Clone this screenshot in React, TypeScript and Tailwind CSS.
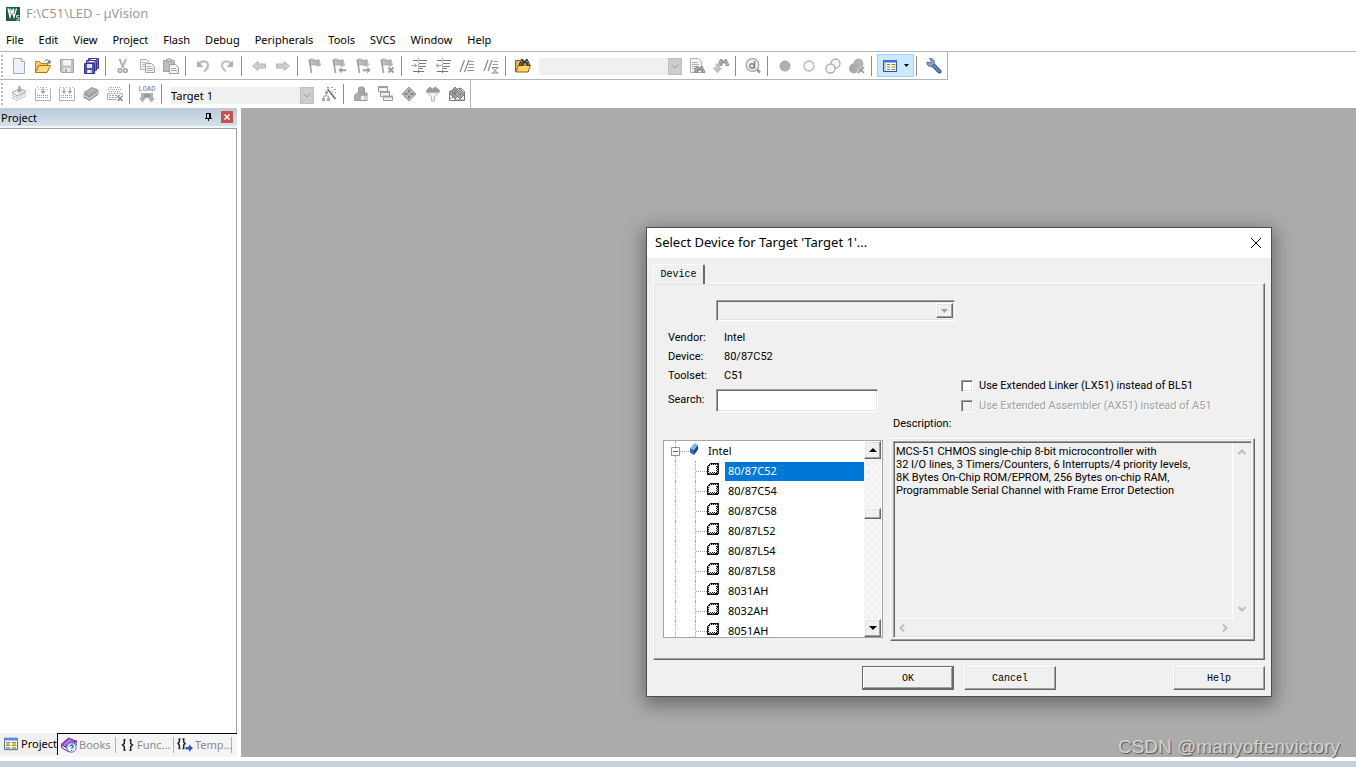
import { useState } from "react";
import type { ReactNode } from "react";

const UI_FONT = "font-['Noto_Sans','Open_Sans',sans-serif]";
const DLG_FONT = "font-['Roboto','Liberation_Sans',sans-serif]";
const MONO_FONT = "font-['Liberation_Mono',monospace]";

const RAISED =
  "border border-t-white border-l-white border-r-[#696969] border-b-[#696969] shadow-[inset_-1px_-1px_0_#a0a0a0,inset_1px_1px_0_#e3e3e3]";
const SUNKEN =
  "border border-t-[#a0a0a0] border-l-[#a0a0a0] border-r-white border-b-white shadow-[inset_1px_1px_0_#696969,inset_-1px_-1px_0_#e3e3e3]";
const RAISED_DEFAULT =
  "border border-[#696969] shadow-[inset_-1px_-1px_0_#696969,inset_1px_1px_0_#fff,inset_-2px_-2px_0_#a0a0a0]";

const MENUS = ["File", "Edit", "View", "Project", "Flash", "Debug", "Peripherals", "Tools", "SVCS", "Window", "Help"];

const DEVICES = ["80/87C52", "80/87C54", "80/87C58", "80/87L52", "80/87L54", "80/87L58", "8031AH", "8032AH", "8051AH"];

const DESCRIPTION = [
  "MCS-51 CHMOS single-chip 8-bit microcontroller with",
  "32 I/O lines, 3 Timers/Counters, 6 Interrupts/4 priority levels,",
  "8K Bytes On-Chip ROM/EPROM, 256 Bytes on-chip RAM,",
  "Programmable Serial Channel with Frame Error Detection",
].join("\n");

function Icon({ children, size = 16 }: { children: ReactNode; size?: number }) {
  return (
    <svg width={size} height={size} viewBox="0 0 16 16" fill="none" aria-hidden="true" className="shrink-0">
      {children}
    </svg>
  );
}

// small bitmap drawn one square per character, "." is empty
function Pixels({ rows, colors }: { rows: string[]; colors: Record<string, string> }) {
  return (
    <svg
      width={rows[0].length}
      height={rows.length}
      viewBox={`0 0 ${rows[0].length} ${rows.length}`}
      shapeRendering="crispEdges"
      aria-hidden="true"
      className="shrink-0"
    >
      {rows.flatMap((row, y) =>
        row.split("").map((c, x) =>
          colors[c] ? <rect key={`${x}-${y}`} x={x} y={y} width={1} height={1} fill={colors[c]} /> : null
        )
      )}
    </svg>
  );
}

const Binoculars = ({ x, y, color = "#777" }: { x: number; y: number; color?: string }) => (
  <g transform={`translate(${x} ${y})`}>
    <path d="M2 0h2l1 1.500h1L7 0h1.500L11 5v2H7.500V4.500h-3V7H0V5z" fill={color} />
    <path d="M2.500 2v1M8 2v1M1.500 5h1M9 5h1" stroke="#e4e4e4" />
  </g>
);

const Flag = () => (
  <>
    <path d="M2 2c1.500-1.200 3-1.200 4.500-.4s3.300 1 5.500 0l1.500 5.500c-2 1.200-3.500 1-5 .2S5.200 6.700 3.700 7.700z" fill="#bcbcbc" stroke="#a6a6a6" strokeWidth=".8" />
    <path d="M6.500 1.800l1 5M10 2.200l.8 5" stroke="#a4a4a4" />
    <path d="M2.200 1.500 4.500 15" stroke="#a0a0a0" strokeWidth="1.500" />
  </>
);

const Floppy = ({ fill, edge }: { fill: string; edge: string }) => (
  <>
    <path d="M1.500 1.500h13v13h-12l-1-1z" fill={fill} stroke={edge} />
    <path d="M4 2h8v5.500H4z" fill="#f4f4f6" />
    <path d="M4.500 10h7v4h-7z" fill="#e9e9ec" />
    <path d="M6 11h2v3H6z" fill={edge} />
  </>
);

const icons = {
  newFile: (
    <Icon>
      <path d="M2.500.5h8l3 3v12h-11z" fill="#eef1fb" stroke="#a3a8bc" />
      <path d="M10.500.5v3h3" fill="#fff" stroke="#a3a8bc" />
    </Icon>
  ),
  open: (
    <Icon>
      <path d="M.5 13.500v-10h4l1.500 2h6.500v3" fill="#f3c95b" stroke="#b8862a" />
      <path d="M.5 14.500 4 7.500h11.500l-3.500 7z" fill="#fbdc7c" stroke="#a97418" />
      <path d="M9.500 3.500c1-2 3.500-2.500 4.500 0" stroke="#4c6f9f" />
      <path d="M15.500 1.500v4h-4z" fill="#4c6f9f" />
    </Icon>
  ),
  save: (
    <Icon>
      <Floppy fill="#c2c2c2" edge="#a6a6a6" />
    </Icon>
  ),
  saveAll: (
    <Icon>
      <path d="M5.500.5h10v10h-10z" fill="#6467bd" stroke="#3a3c8f" />
      <path d="M3.500 2.500h10v10h-10z" fill="#7376cc" stroke="#3a3c8f" />
      <path d="M1.500 5.500h10v10h-10z" fill="#5053ad" stroke="#303284" />
      <path d="M4 6h5v4H4z" fill="#e6e8fa" />
      <path d="M4 12h5v3H4z" fill="#c7c9ee" />
      <path d="M5 12h2v3H5zM6 3h5v1H6zM8 1h5v1H8z" fill="#fff" />
    </Icon>
  ),
  cut: (
    <Icon>
      <path d="M4.500 1l4 9M11 1 7 10" stroke="#b4b4b4" strokeWidth="2" />
      <circle cx="5" cy="12.500" r="1.800" stroke="#a0a0a0" strokeWidth="1.500" />
      <circle cx="10.500" cy="12.500" r="1.800" stroke="#a0a0a0" strokeWidth="1.500" />
    </Icon>
  ),
  copy: (
    <Icon>
      <path d="M1.500 1.500h6l2 2v8h-8z" fill="#f2f2f2" stroke="#b2b2b2" />
      <path d="M3 4.500h4M3 6.500h4M3 8.500h4" stroke="#bbb" />
      <path d="M6.500 5.500h6l3 3v6h-9z" fill="#f2f2f2" stroke="#a6a6a6" />
      <path d="M8 8.500h4M8 10.500h6M8 12.500h6" stroke="#b0b0b0" />
    </Icon>
  ),
  paste: (
    <Icon>
      <path d="M.5 2.500h11v11H.5z" fill="#bdbdbd" stroke="#a2a2a2" />
      <path d="M3.500 3.500v-2h1.500c0-2 2-2 2 0h1.500v2z" fill="#dadada" stroke="#9a9a9a" />
      <path d="M6.500 6.500h6l3 3v6h-9z" fill="#f4f4f4" stroke="#9a9a9a" />
      <path d="M8 10.500h5M8 12.500h6" stroke="#aaa" />
    </Icon>
  ),
  undo: (
    <Icon>
      <path d="M4 6C6.500 2 12.500 2.500 13 7c.2 2.500-1.500 4.500-4 6.500" stroke="#bcbcbc" strokeWidth="2.200" />
      <path d="M2 2.500v6.500h6.500z" fill="#aeaeae" />
    </Icon>
  ),
  redo: (
    <Icon>
      <path d="M12 6C9.500 2 3.500 2.500 3 7c-.2 2.500 1.500 4.500 4 6.500" stroke="#c4c4c4" strokeWidth="2.200" />
      <path d="M14 2.500v6.500H7.500z" fill="#aeaeae" />
    </Icon>
  ),
  back: (
    <Icon>
      <path d="M1.500 8 7 3.500v2.500h7.500v4H7v2.500z" fill="#cfcfcf" stroke="#b2b2b2" />
    </Icon>
  ),
  forward: (
    <Icon>
      <path d="M14.500 8 9 3.500v2.500H1.500v4H9v2.500z" fill="#cfcfcf" stroke="#b2b2b2" />
    </Icon>
  ),
  flag: (
    <Icon>
      <Flag />
    </Icon>
  ),
  flagPrev: (
    <Icon>
      <Flag />
      <path d="M7 12l4-3.500V11h4.500v2.500H11V16z" fill="#a0a0a0" stroke="#fff" strokeWidth=".5" />
    </Icon>
  ),
  flagNext: (
    <Icon>
      <Flag />
      <path d="M16 12l-4-3.500V11H7.500v2.500H12V16z" fill="#a0a0a0" stroke="#fff" strokeWidth=".5" />
    </Icon>
  ),
  flagClear: (
    <Icon>
      <Flag />
      <path d="M9.500 9.500l5 5M14.500 9.500l-5 5" stroke="#9a9a9a" strokeWidth="1.800" />
    </Icon>
  ),
  indent: (
    <Icon>
      <path d="M2 2.500h14M8 5.500h7M8 8.500h7M8 10.500h4M2 13.500h11" stroke="#777" />
      <path d="M0 7.500h4" stroke="#aaa" />
      <path d="M3.500 5v5L6.500 7.500z" fill="#aaa" />
      <path d="M7.500 0v16" stroke="#888" strokeDasharray="1 1" />
    </Icon>
  ),
  outdent: (
    <Icon>
      <path d="M2 2.500h14M8 5.500h7M8 8.500h7M8 10.500h4M2 13.500h11" stroke="#777" />
      <path d="M3 7.500h4" stroke="#aaa" />
      <path d="M3.500 5v5L.5 7.500z" fill="#aaa" />
      <path d="M7.500 0v16" stroke="#888" strokeDasharray="1 1" />
    </Icon>
  ),
  comment: (
    <Icon>
      <path d="M1 14 5.500 2M5.500 14 10 2" stroke="#8d8d8d" strokeWidth="1.300" />
      <path d="M10.500 3.500H15M9.500 6.500H15M9 9.500h6M8 12.500h7" stroke="#999" />
    </Icon>
  ),
  uncomment: (
    <Icon>
      <path d="M1 13 5 2M5 13 9 2" stroke="#8d8d8d" strokeWidth="1.300" />
      <path d="M10.500 3.500H15M9.500 6.500H15" stroke="#999" />
      <path d="M8.500 9.500h7M9.500 10l5 5M14.500 10l-5 5M8.500 15h7" stroke="#8a8a8a" />
    </Icon>
  ),
  findInFiles: (
    <Icon>
      <path d="M.5 13.500v-11h4l1 1.500h8v9.500z" fill="#f0b93c" stroke="#7d5a12" />
      <path d="M1 14 3.500 7h12L13 14z" fill="#ffd768" stroke="#8b6417" />
      <Binoculars x={4} y={1} color="#3d3d3d" />
    </Icon>
  ),
  findText: (
    <Icon>
      <path d="M1.500.5h8l3 3v11h-11z" fill="#f3f3f3" stroke="#b0b0b0" />
      <path d="M3 4.500h6M3 6.500h7M3 8.500h5M3 10.500h4" stroke="#b2b2b2" />
      <Binoculars x={5} y={8} color="#8d8d8d" />
    </Icon>
  ),
  findNext: (
    <Icon>
      <Binoculars x={5} y={1} color="#999" />
      <path d="M3 6h3.500v4H9l-4.500 5L0 10h3z" fill="#c2c2c2" stroke="#b2b2b2" strokeWidth=".6" />
    </Icon>
  ),
  debug: (
    <Icon>
      <circle cx="7.500" cy="7" r="6.300" fill="#f1f1f1" stroke="#a4a4a4" strokeWidth="1.300" />
      <circle cx="7" cy="8" r="2.200" stroke="#858585" strokeWidth="1.500" />
      <path d="M9.500 3v7.500" stroke="#858585" strokeWidth="1.500" />
      <path d="M12 11.500l3 3" stroke="#9a9a9a" strokeWidth="2.500" />
    </Icon>
  ),
  bpInsert: (
    <Icon>
      <circle cx="8" cy="8" r="5" fill="#b0b0b0" stroke="#a2a2a2" />
    </Icon>
  ),
  bpEnable: (
    <Icon>
      <circle cx="8" cy="8" r="5" fill="#fafafa" stroke="#b4b4b4" strokeWidth="1.300" />
    </Icon>
  ),
  bpDisableAll: (
    <Icon>
      <circle cx="10.500" cy="5.500" r="4.500" fill="#f5f5f5" stroke="#adadad" strokeWidth="1.300" />
      <circle cx="5.500" cy="10.500" r="4.500" fill="#f9f9f9" stroke="#adadad" strokeWidth="1.300" />
    </Icon>
  ),
  bpKillAll: (
    <Icon>
      <circle cx="9.500" cy="5.500" r="5" fill="#b4b4b4" />
      <circle cx="5" cy="10.500" r="5" fill="#aaa" />
      <path d="M5 13l9-8v9H6z" fill="#b0b0b0" />
      <path d="M9 9l6 6M15 9l-6 6" stroke="#eee" strokeWidth="2.800" />
      <path d="M9 9l6 6M15 9l-6 6" stroke="#929292" strokeWidth="1.500" />
    </Icon>
  ),
  windowList: (
    <Icon>
      <path d="M1.500 2.500h13v11h-13z" fill="#fff" stroke="#2b51a1" />
      <path d="M1 2h14v2.500H1z" fill="#3f6fd0" />
      <path d="M2 5h2v8H2z" fill="#c4cbd8" />
      <path d="M5 6.500h3M5 9h3M5 11.500h3M9.500 6.500h4M9.500 9h4M9.500 11.500h4" stroke="#8a8718" strokeWidth="1.200" />
    </Icon>
  ),
  wrench: (
    <Icon>
      <path d="M7 7l6.500 6.500" stroke="#2f4a84" strokeWidth="4" strokeLinecap="round" />
      <path d="M7 7l6.500 6.500" stroke="#6f8cc2" strokeWidth="2" strokeLinecap="round" />
      <path d="M3.500.5 5.500 3 4 5 1 4C.5 7 3 9 5.500 8.500l3-3C9 3 7 0 3.500.5z" fill="#8ba0c4" stroke="#4f689c" />
    </Icon>
  ),
  translate: (
    <Icon>
      <path d="M1 11.500 6 14.500l9-5M1 9l5 3 9-5" stroke="#999" strokeDasharray="1.500 .7" />
      <path d="M1 6.500 9 2.500l6 3-9 4.500z" fill="#f0f0f0" stroke="#a4a4a4" />
      <path d="M7.500 0h2v4h2L8.500 7l-3-3h2z" fill="#a4a4a4" />
    </Icon>
  ),
  build: (
    <Icon>
      <path d="M.5 2.500v12h15v-12" stroke="#b2b2b2" />
      <path d="M2 1.500h12M3 3.500h11" stroke="#b0b0b0" strokeDasharray="1 2" />
      <path d="M2 9.500h12M2 11.500h12" stroke="#999" strokeDasharray="1 1" />
      <path d="M7.500 1h1v4h2L8 8 5.500 5h2z" fill="#999" />
    </Icon>
  ),
  rebuild: (
    <Icon>
      <path d="M.5 2.500v12h15v-12" stroke="#b2b2b2" />
      <path d="M1 1.500h14" stroke="#aaa" strokeDasharray="1 2" />
      <path d="M2 9.500h12M2 11.500h12" stroke="#999" strokeDasharray="1 1" />
      <path d="M4.500 2h1v3h1.500L5 8 3 5h1.500zM10.500 2h1v3H13L11 8 9 5h1.500z" fill="#999" />
    </Icon>
  ),
  batch: (
    <Icon>
      <path d="M1 7.500v4l5.500 3 8.500-6v-4" fill="#a0a0a0" stroke="#9a9a9a" />
      <path d="M1 9.500l5.500 3 8.500-6" stroke="#e8e8e8" />
      <path d="M1 6.500 9 1.500l6 2.500-8.500 5.500z" fill="#b2b2b2" stroke="#9c9c9c" />
    </Icon>
  ),
  stopBuild: (
    <Icon>
      <path d="M2 1.500h12M1 3.500h14M2 5.500h12" stroke="#a4a4a4" strokeDasharray="1 1" />
      <path d="M.5 7.500v6h9" stroke="#acacac" />
      <path d="M.5 7.500h15v3M2 9.500h12M2 11.500h8" stroke="#a0a0a0" strokeDasharray="2 1" />
      <path d="M10.500 10l5 5M15.500 10l-5 5" stroke="#8a8a8a" strokeWidth="1.500" />
    </Icon>
  ),
  wand: (
    <Icon>
      <path d="M6.500 3l8 10" stroke="#777" strokeWidth="1.800" />
      <path d="M6 1.500h2M10 1.500h2M13 3.500h2M11 5.500h1M14 6.500h1" stroke="#999" />
      <path d="M5.500 7v3M2.500 12.500V10h5v2.500" stroke="#a6a6a6" />
      <path d="M4 5h3v3H4zM1 12h3v3H1zM6 12h3v3H6z" fill="#a8a8a8" />
    </Icon>
  ),
  components: (
    <Icon>
      <path d="M5.500 7V2l1.500-1h3l1.500 1v5z" fill="#a6a6a6" stroke="#999" />
      <path d="M1.500 9.500 4 7h10v7.500H1.500z" fill="#acacac" stroke="#999" />
      <path d="M8 10h6v4H8z" fill="#f0f0f0" />
      <path d="M11 10h3v4h-3z" fill="#d0d0d0" />
    </Icon>
  ),
  layers: (
    <Icon>
      <path d="M1.500.5h9v5h-9z" fill="#f1f1f1" stroke="#999" />
      <path d="M1 0h10v2H1z" fill="#a0a0a0" />
      <path d="M3.500 5.500h9v5h-9z" fill="#f1f1f1" stroke="#999" />
      <path d="M3 5h10v2H3z" fill="#a0a0a0" />
      <path d="M6.500 10.500h9v4h-9z" fill="#f1f1f1" stroke="#999" />
      <path d="M6 9.500h10v2H6z" fill="#a0a0a0" />
    </Icon>
  ),
  diamond: (
    <Icon>
      <path d="M8 1l7 7-7 7-7-7z" fill="#b8b8b8" stroke="#999" />
      <path d="M8 3.500v3M8 9.500v3M3.500 8h3M9.500 8h3M7 5h2M7 11h2M5 7v2M11 7v2" stroke="#6f6f6f" />
    </Icon>
  ),
  funnel: (
    <Icon>
      <path d="M1 5l4-4 2.500 2L10.500 1 15 5l-3 2H4z" fill="#999" stroke="#8a8a8a" strokeDasharray="1 .5" />
      <path d="M2 6.500h12L9.500 11v4h-3v-4z" fill="#f0f0f0" stroke="#b2b2b2" />
    </Icon>
  ),
  packs: (
    <Icon>
      <path d="M.5 5.500v9h15v-9L12 2z" fill="#fff" stroke="#777" />
      <path d="M6 1l6 6-6 6L0 7z" fill="#9a9a9a" stroke="#808080" />
      <path d="M11 3l5 5-5 5-5-5z" fill="#acacac" stroke="#808080" />
      <path d="M3 7h3M6 4v6M9 8h5M11 5.500v5" stroke="#6c6c6c" strokeDasharray="1 1" />
      <path d="M1 13l3-2 3 3h8" stroke="#888" />
    </Icon>
  ),
};

const LoadIcon = () => (
  <span className="flex flex-col items-center">
    <span className={`${MONO_FONT} text-[7px] leading-[7px] text-[#6b6b6b]`}>LOAD</span>
    <svg width="16" height="10" viewBox="0 0 16 10" aria-hidden="true">
      <path d="M2 0h12v5h2l-3.500 4.500L9 5 8 5 7 5 3.500 9.500 0 5h2z" fill="#b0b0b0" />
      <path d="M5 1h6v3H5z" fill="#999" />
    </svg>
  </span>
);

function ToolButton({ label, children }: { label: string; children: ReactNode }) {
  return (
    <button type="button" aria-label={label} className="flex h-6 w-6 shrink-0 items-center justify-center">
      {children}
    </button>
  );
}

const Sep = () => <span className="ml-0.5 mr-[5px] h-5 w-px shrink-0 bg-[#8c8c8c]" />;

const Grip = () => <span className="ml-px mr-1 h-[22px] w-0.5 shrink-0 bg-[repeating-linear-gradient(180deg,#b9b9b9_0_2px,transparent_2px_4px)]" />;

function ToolCombo({ label, value }: { label: string; value: string }) {
  return (
    <div className="ml-1 mr-[3px] flex h-[17px] w-[143px] shrink-0 bg-[#f0f0f0]">
      <select aria-label={label} defaultValue={value} className="min-w-0 flex-1 appearance-none text-[11px] leading-[17px] outline-none">
        <option>{value}</option>
      </select>
      <span className="flex w-[14px] items-center justify-center border border-[#bdbdbd] bg-[#cdcdcd]">
        <svg width="8" height="5" viewBox="0 0 8 5" fill="none" aria-hidden="true">
          <path d="M.5.5 4 4 7.500.5" stroke="#9a9a9a" />
        </svg>
      </span>
    </div>
  );
}

function Toolbars() {
  return (
    <div className="flex flex-col items-start border-t border-[#b4b4b4] bg-white">
      <div className="flex h-7 items-center border-r border-b border-[#b4b4b4] pr-px">
        <Grip />
        <ToolButton label="New file">{icons.newFile}</ToolButton>
        <ToolButton label="Open">{icons.open}</ToolButton>
        <ToolButton label="Save">{icons.save}</ToolButton>
        <ToolButton label="Save all">{icons.saveAll}</ToolButton>
        <Sep />
        <ToolButton label="Cut">{icons.cut}</ToolButton>
        <ToolButton label="Copy">{icons.copy}</ToolButton>
        <ToolButton label="Paste">{icons.paste}</ToolButton>
        <Sep />
        <ToolButton label="Undo">{icons.undo}</ToolButton>
        <ToolButton label="Redo">{icons.redo}</ToolButton>
        <Sep />
        <ToolButton label="Navigate back">{icons.back}</ToolButton>
        <ToolButton label="Navigate forward">{icons.forward}</ToolButton>
        <Sep />
        <ToolButton label="Toggle bookmark">{icons.flag}</ToolButton>
        <ToolButton label="Previous bookmark">{icons.flagPrev}</ToolButton>
        <ToolButton label="Next bookmark">{icons.flagNext}</ToolButton>
        <ToolButton label="Clear bookmarks">{icons.flagClear}</ToolButton>
        <Sep />
        <ToolButton label="Indent">{icons.indent}</ToolButton>
        <ToolButton label="Unindent">{icons.outdent}</ToolButton>
        <ToolButton label="Comment">{icons.comment}</ToolButton>
        <ToolButton label="Uncomment">{icons.uncomment}</ToolButton>
        <Sep />
        <ToolButton label="Find in files">{icons.findInFiles}</ToolButton>
        <div className="pt-0.5">
          <ToolCombo label="Find text" value="" />
        </div>
        <ToolButton label="Find">{icons.findText}</ToolButton>
        <ToolButton label="Incremental find">{icons.findNext}</ToolButton>
        <Sep />
        <ToolButton label="Debug session">{icons.debug}</ToolButton>
        <Sep />
        <ToolButton label="Insert breakpoint">{icons.bpInsert}</ToolButton>
        <ToolButton label="Enable breakpoint">{icons.bpEnable}</ToolButton>
        <ToolButton label="Disable all breakpoints">{icons.bpDisableAll}</ToolButton>
        <ToolButton label="Kill all breakpoints">{icons.bpKillAll}</ToolButton>
        <Sep />
        <button
          type="button"
          aria-label="Window layout"
          className="flex h-[23px] w-[37px] shrink-0 items-center gap-1.5 border border-[#99d1ff] bg-[#cce8ff] pl-1"
        >
          {icons.windowList}
          <svg width="5" height="3" viewBox="0 0 5 3" aria-hidden="true">
            <path d="M0 0h5L2.500 3z" fill="#000" />
          </svg>
        </button>
        <Sep />
        <ToolButton label="Configuration">{icons.wrench}</ToolButton>
      </div>

      <div className="flex h-7 items-center border-r border-[#b4b4b4] pr-px">
        <Grip />
        <ToolButton label="Translate">{icons.translate}</ToolButton>
        <ToolButton label="Build">{icons.build}</ToolButton>
        <ToolButton label="Rebuild">{icons.rebuild}</ToolButton>
        <ToolButton label="Batch build">{icons.batch}</ToolButton>
        <ToolButton label="Stop build">{icons.stopBuild}</ToolButton>
        <Sep />
        <ToolButton label="Download">
          <LoadIcon />
        </ToolButton>
        <Sep />
        <div className="pt-0.5">
          <ToolCombo label="Target" value="Target 1" />
        </div>
        <ToolButton label="Target options">{icons.wand}</ToolButton>
        <Sep />
        <ToolButton label="File extensions">{icons.components}</ToolButton>
        <ToolButton label="Manage layers">{icons.layers}</ToolButton>
        <ToolButton label="Run-time environment">{icons.diamond}</ToolButton>
        <ToolButton label="Select packs">{icons.funnel}</ToolButton>
        <ToolButton label="Pack installer">{icons.packs}</ToolButton>
      </div>
    </div>
  );
}

const PIN = [
  ".xxxxx.",
  ".x..xx.",
  ".x..xx.",
  ".x..xx.",
  ".x..xx.",
  "xxxxxxx",
  "...x...",
  "...x...",
];

function ProjectPanel() {
  return (
    <aside className="mr-1 flex w-[237px] shrink-0 flex-col bg-[#f5f5f5]">
      <header className="flex h-[18px] items-center bg-linear-to-b from-[#bccad9] to-[#d5e0ed] pr-1 pl-px">
        <h2 className="flex-1 pt-0.5 text-[11px] leading-4">Project</h2>
        <button type="button" aria-label="Auto hide" className="mr-[9px]">
          <Pixels rows={PIN} colors={{ x: "#000" }} />
        </button>
        <button type="button" aria-label="Close panel" className="flex h-3 w-3 items-center justify-center bg-[#c75050]">
          <svg width="6" height="6" viewBox="0 0 6 6" aria-hidden="true">
            <path d="M.5.5l5 5M5.500.5l-5 5" stroke="#fff" strokeWidth="1.500" />
          </svg>
        </button>
      </header>
      <div className="mt-0.5 flex-1 border-t border-r border-[#a0a0a0] bg-white" />
      <nav className="mb-0.5 flex h-[22px] text-[11px] leading-[22px] text-[#8a8a8a]">
        <button type="button" className="flex w-[58px] items-center gap-[3px] border-r border-black bg-[#f0f0f0] pl-1 text-black">
          <Icon size={14}>
            <path d="M.5 1.500h15v13H.5z" fill="#fff" stroke="#2b51a1" />
            <path d="M0 1h16v3H0z" fill="#5b8be0" />
            <path d="M2 6.500h5M2 9.500h5M2 12.500h5M9 6.500h5M9 9.500h5M9 12.500h5" stroke="#9a9712" strokeWidth="1.700" />
          </Icon>
          Project
        </button>
        <button type="button" className="flex flex-1 items-center border-t border-black">
          <span className="flex h-4 w-[58px] items-center gap-0.5 border-r border-[#b0b0b0] pl-[3px]">
            <Icon>
              <path d="M0 8l1 3 7 4 8-8V4z" fill="#e8e2f5" stroke="#5b2f98" />
              <path d="M0 7.500 7.500 1 16 4.500 8 12z" fill="#9a58d8" stroke="#5b2f98" />
              <path d="M3 8l7-5.500" stroke="#c9a0f0" />
              <circle cx="10.500" cy="10.500" r="4.700" fill="#eef4fd" stroke="#4676bd" />
              <path d="M9 9.500c0-2 3.200-2 3.200 0 0 1.200-1.600 1-1.600 2.200M10.600 13v1" stroke="#2f62b2" strokeWidth="1.300" />
            </Icon>
            Books
          </span>
        </button>
        <button type="button" className="flex items-center border-t border-black">
          <span className="flex h-4 w-[58px] items-center gap-[3px] border-r border-[#b0b0b0] pl-[5px]">
            <svg width="13" height="12" viewBox="0 0 13 12" fill="none" aria-hidden="true" className="shrink-0">
              <path d="M4.500.8H3.300v3.700L1.500 6l1.800 1.500v3.700h1.200M8.500.8h1.200v3.700L11.500 6 9.700 7.500v3.700H8.500" stroke="#222" strokeWidth="1.500" />
            </svg>
            Func...
          </span>
        </button>
        <button type="button" className="flex items-center border-t border-black pr-[5px]">
          <span className="flex h-4 w-[58px] items-center gap-0.5 border-r border-[#b0b0b0] pl-[3px]">
            <svg width="16" height="14" viewBox="0 0 16 14" fill="none" aria-hidden="true" className="shrink-0">
              <path d="M3.500 1H2.300v3L1 5.500 2.300 7v3.500h1.200M5.500 1h1.200v3L8 5.500 6.700 7v3.500H5.500" stroke="#222" strokeWidth="1.500" />
              <path d="M8.500 9H12V6.500l4 3.500-4 4v-2.500H8.500z" fill="#2c56c4" />
            </svg>
            Temp...
          </span>
        </button>
      </nav>
    </aside>
  );
}

const CHIP = [
  "...xxxxxxxxx",
  "..xgxgxgxgxx",
  ".xxooooooogx",
  "xgoooooooxxx",
  "xxooooooooxx",
  "xgoooooooxgx",
  "xxooooooooxx",
  "xgoooooooxgx",
  "xxooooooooxx",
  "xgoxoxoxoxgx",
  "xxxgxgxgxxxx",
  "xxxxxxxxxxx.",
];

function ScrollArrow({ down = false }: { down?: boolean }) {
  return (
    <button
      type="button"
      aria-label={down ? "Scroll down" : "Scroll up"}
      className={`flex h-[18px] w-[17px] items-center justify-center bg-[#f0f0f0] ${RAISED}`}
    >
      <svg width="8" height="4" viewBox="0 0 8 4" aria-hidden="true">
        <path d={down ? "M0 0h8L4 4z" : "M0 4h8L4 0z"} fill="#000" />
      </svg>
    </button>
  );
}

function DeviceTree() {
  const [selected, setSelected] = useState("80/87C52");

  return (
    <div className={`mt-7 flex h-[198px] overflow-hidden border border-[#a5a5a8] bg-white pr-px ${UI_FONT} text-[11px]`}>
      <ul className="flex-1">
        <li>
          <div className="flex h-5 items-center">
            <span className="ml-[7px] flex h-5 w-[9px] shrink-0 flex-col items-center">
              <span className="flex-1 border-l border-dotted border-[#a0a0a0]" />
              <button type="button" aria-label="Collapse Intel">
                <svg width="9" height="9" viewBox="0 0 9 9" aria-hidden="true" className="block">
                  <path d="M.5.5h8v8h-8z" fill="#fff" stroke="#919191" />
                  <path d="M2 4.500h5" stroke="#3a5fa0" />
                </svg>
              </button>
              <span className="flex-1 border-l border-dotted border-[#a0a0a0]" />
            </span>
            <span className="w-[9px] border-t border-dotted border-[#a0a0a0]" />
            <svg width="10" height="12" viewBox="0 0 10 12" aria-hidden="true" className="mb-1">
              <path d="M1 5 6 0l3 2-4 5z" fill="#7cb5ee" />
              <path d="M1 5l4 2v5L1 9.500z" fill="#2c66b8" />
              <path d="M5 7l4-5v4.500L5 12z" fill="#1b3f8e" />
            </svg>
            <span className="ml-[9px]">Intel</span>
          </div>
          <ul>
            {DEVICES.map((name) => (
              <li key={name} className="flex h-5 items-center">
                <span className="ml-[11px] h-5 w-5 border-l border-dotted border-[#a0a0a0]" />
                <span className="flex h-5 w-3 items-center border-l border-dotted border-[#a0a0a0]">
                  <span className="w-full border-t border-dotted border-[#a0a0a0]" />
                </span>
                <span className="mr-1.5 mb-1">
                  <Pixels rows={CHIP} colors={{ x: "#111", g: "#bbb", o: "#fff" }} />
                </span>
                <button
                  type="button"
                  onClick={() => setSelected(name)}
                  className={`h-[19px] flex-1 pl-[3px] text-left ${name === selected ? "bg-[#0078d7] text-white" : ""}`}
                >
                  {name}
                </button>
              </li>
            ))}
          </ul>
        </li>
      </ul>
      <div className="flex w-[17px] flex-col bg-[repeating-conic-gradient(#ececec_0_25%,#fff_0_50%)] bg-[length:2px_2px]">
        <ScrollArrow />
        <span className={`mt-[49px] h-[11px] bg-[#f0f0f0] ${RAISED}`} />
        <span className="flex-1" />
        <ScrollArrow down />
      </div>
    </div>
  );
}

function Chevron({ d }: { d: string }) {
  return (
    <svg width="8" height="8" viewBox="0 0 8 8" fill="none" aria-hidden="true">
      <path d={d} stroke="#bdbdbd" strokeWidth="2" />
    </svg>
  );
}

function DescriptionBox() {
  return (
    <div className={`mt-1.5 mr-px p-0.5 ${RAISED}`}>
      <div className={`grid h-[197px] grid-cols-[1fr_18px] grid-rows-[1fr_18px] ${SUNKEN}`}>
        <textarea
          id="description"
          readOnly
          value={DESCRIPTION}
          className="mt-px ml-px resize-none overflow-hidden border-r border-b border-white pt-0.5 pl-px text-[11px] leading-[13px] whitespace-pre outline-none"
        />
        <div className="flex flex-col items-center justify-between py-1.5">
          <Chevron d="M.5 6 4 2.500 7.500 6" />
          <Chevron d="M.5 2 4 5.500 7.500 2" />
        </div>
        <div className="flex items-center justify-between px-1">
          <Chevron d="M6 .5 2.500 4 6 7.500" />
          <Chevron d="M2 .5 5.500 4 2 7.500" />
        </div>
      </div>
    </div>
  );
}

function InfoRow({ label, value }: { label: string; value: string }) {
  return (
    <div className="flex h-[19px] items-center pl-[5px]">
      <dt className="w-14">{label}</dt>
      <dd>{value}</dd>
    </div>
  );
}

function DialogButton({ label, primary = false }: { label: string; primary?: boolean }) {
  return (
    <button
      type="button"
      className={`h-6 w-[92px] bg-[#f0f0f0] ${MONO_FONT} text-[10px] ${primary ? RAISED_DEFAULT : RAISED}`}
    >
      {label}
    </button>
  );
}

function DeviceDialog() {
  return (
    <section
      role="dialog"
      aria-labelledby="dialog-title"
      className="absolute top-[119px] left-[405px] w-[626px] border border-[#4d4d4d] bg-[#f0f0f0] shadow-[0_5px_18px_2px_rgba(0,0,0,0.4)]"
    >
      <header className="flex h-[30px] items-center bg-white pr-[9px] pl-2">
        <h1 id="dialog-title" className="flex-1 text-[13px]">
          Select Device for Target 'Target 1'...
        </h1>
        <button type="button" aria-label="Close">
          <svg width="12" height="12" viewBox="0 0 12 12" fill="none" aria-hidden="true">
            <path d="M1 1l10 10M11 1 1 11" stroke="#000" />
          </svg>
        </button>
      </header>

      <div className={`px-1.5 pt-1.5 pb-1.5 ${DLG_FONT} text-[11px]`}>
        <button
          type="button"
          className={`relative -mb-px block h-5 w-[52px] rounded-t-xs border-t border-r-2 border-l border-t-white border-r-[#696969] border-l-white bg-[#f0f0f0] ${MONO_FONT} text-[10px]`}
        >
          Device
        </button>
        <div className={`px-2 pt-4 pb-[18px] ${RAISED}`}>
          <div className={`ml-[54px] flex h-[21px] w-[239px] py-0.5 pr-px pl-0.5 ${SUNKEN}`}>
            <select aria-label="Device database" disabled className="flex-1 appearance-none" />
            <span className={`flex w-[17px] items-center justify-center ${RAISED}`}>
              <svg width="7" height="4" viewBox="0 0 7 4" aria-hidden="true">
                <path d="M0 0h7L3.500 4z" fill="#a0a0a0" />
              </svg>
            </span>
          </div>

          <div className="flex gap-[7px] pt-2 pl-px">
            <div className="w-[220px] shrink-0">
              <dl>
                <InfoRow label="Vendor:" value="Intel" />
                <InfoRow label="Device:" value="80/87C52" />
                <InfoRow label="Toolset:" value="C51" />
              </dl>
              <div className="mt-[3px] flex items-center pl-[5px]">
                <label htmlFor="search" className="w-12">
                  Search:
                </label>
                <input id="search" type="text" className={`h-[23px] w-[162px] bg-white px-1 outline-none ${SUNKEN}`} />
              </div>
              <DeviceTree />
            </div>

            <div className="flex-1 pt-[47px]">
              <label className="flex h-5 items-center gap-1.5 pl-[71px]">
                <input type="checkbox" className={`h-3 w-3 appearance-none bg-white ${SUNKEN}`} />
                Use Extended Linker (LX51) instead of BL51
              </label>
              <label className="flex h-5 items-center gap-1.5 pl-[71px] text-[#a0a0a0] [text-shadow:1px_1px_0_#fff]">
                <input type="checkbox" disabled className={`h-3 w-3 appearance-none bg-[#f0f0f0] ${SUNKEN}`} />
                Use Extended Assembler (AX51) instead of A51
              </label>
              <label htmlFor="description" className="block pl-[3px] leading-4">
                Description:
              </label>
              <DescriptionBox />
            </div>
          </div>
        </div>

        <div className="flex justify-end gap-2.5 pt-1.5">
          <DialogButton label="OK" primary />
          <DialogButton label="Cancel" />
          <span className="w-[97px]" />
          <DialogButton label="Help" />
        </div>
      </div>
    </section>
  );
}

export default function App() {
  return (
    <div className={`flex min-h-screen flex-col bg-white text-black ${UI_FONT}`}>
      <div className="flex h-7 items-center gap-1.5 pl-1.5">
        <svg width="14" height="14" viewBox="0 0 14 14" fill="none" aria-hidden="true">
          <path d="M0 0h14v14H0z" fill="#1d5c40" />
          <path d="M2 1.500 4 10l2-6.500L8 10l2.500-8.500M4 1.500v4M7.500 1.500v4" stroke="#fff" strokeWidth="1.300" />
          <path d="M13 8.500h-2.500v2H13V13h-2.800" stroke="#c6e3d4" />
        </svg>
        <span className="text-[13px] text-[#999]">F:\C51\LED - µVision</span>
      </div>
      <nav className="flex h-[23px] items-center gap-[15px] pt-0.5 pl-1.5 text-[11px]">
        {MENUS.map((menu) => (
          <button key={menu} type="button">
            {menu}
          </button>
        ))}
      </nav>
      <Toolbars />
      <div className="flex flex-1">
        <ProjectPanel />
        <main className="relative flex-1 bg-[#ababab]">
          <DeviceDialog />
          <span className="absolute right-4 bottom-0 font-['Liberation_Sans',sans-serif] text-[19px] leading-5 text-[#d4d4d4] [text-shadow:1px_1px_1px_#555]">
            CSDN @manyoftenvictory
          </span>
        </main>
      </div>
      <footer className="mt-1 h-1.5 bg-[#c6d2e0]" />
    </div>
  );
}
